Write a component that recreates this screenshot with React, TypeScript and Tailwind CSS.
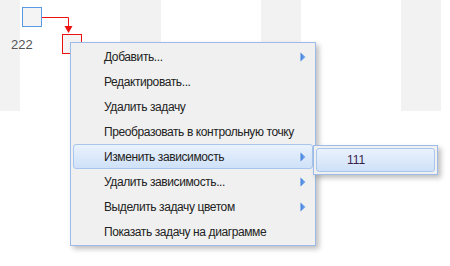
const items = [
  { label: "Добавить...", sub: true },
  { label: "Редактировать...", sub: false },
  { label: "Удалить задачу", sub: false },
  { label: "Преобразовать в контрольную точку", sub: false },
  { label: "Изменить зависимость", sub: true, active: true },
  { label: "Удалить зависимость...", sub: true },
  { label: "Выделить задачу цветом", sub: true },
  { label: "Показать задачу на диаграмме", sub: false },
];

function Arrow() {
  return (
    <svg width="6" height="10" viewBox="0 0 6 10" className="shrink-0">
      <defs>
        <linearGradient id="ag" x1="0" y1="0" x2="1" y2="0">
          <stop offset="0" stopColor="#3f7fdc" />
          <stop offset="1" stopColor="#7db0f0" />
        </linearGradient>
      </defs>
      <path d="M0.5 0.5 L5.5 5 L0.5 9.5 Z" fill="url(#ag)" />
    </svg>
  );
}

export default function App() {
  return (
    <div
      className="relative w-[450px] h-[266px] bg-white overflow-hidden text-[12px] text-[#222]"
      style={{ fontFamily: '"Liberation Sans", Arial, sans-serif' }}
    >
      {/* timeline stripes */}
      <div className="flex h-[111px]">
        <div className="w-[20px] bg-[#f2f2f2]" />
        <div className="w-[100px]" />
        <div className="w-[41px] bg-[#f2f2f2]" />
        <div className="w-[100px]" />
        <div className="w-[40px] bg-[#f2f2f2]" />
        <div className="w-[100px]" />
        <div className="w-[40px] bg-[#f2f2f2]" />
      </div>

      {/* tasks */}
      <div className="absolute left-[22px] top-[7px] w-[20px] h-[20px] border border-[#5b9be6] bg-[#f4f4f4]" />
      <div className="absolute left-[11px] top-[35px] text-[13px] text-[#555]">222</div>
      <svg className="absolute left-0 top-0" width="100" height="60">
        <path d="M42 17.5 H68.5 V27" stroke="#ee1111" strokeWidth="1" fill="none" />
        <path d="M64.5 26 H72.5 L68.5 33 Z" fill="#ee1111" />
      </svg>
      <div className="absolute left-[62px] top-[34px] w-[20px] h-[20px] border border-[#ee1111] bg-[#f4f4f4]" />

      {/* context menu */}
      <div className="absolute left-[70px] top-[42px] w-[246px] border border-[#9dbbe8] bg-[#f0f0f0] py-[1px] px-[2px] shadow-[3px_3px_5px_rgba(0,0,0,0.25)] tracking-[-0.4px]">
        {items.map((it) => (
          <div
            key={it.label}
            className={
              "flex items-center h-[25px] pl-[30px] pr-[6px] " +
              (it.active
                ? "rounded-[3px] border border-[#a9c6ee] bg-gradient-to-b from-[#eaf2fd] to-[#cfe1f8]"
                : "border border-transparent")
            }
          >
            <span className="flex-1 whitespace-nowrap">{it.label}</span>
            {it.sub && <Arrow />}
          </div>
        ))}
      </div>

      {/* submenu */}
      <div className="absolute left-[313px] top-[145px] w-[125px] h-[30px] border border-[#9dbbe8] bg-[#f0f0f0] p-[2px] shadow-[3px_3px_5px_rgba(0,0,0,0.25)]">
        <div className="flex items-center h-full rounded-[3px] border border-[#a9c6ee] bg-gradient-to-b from-[#eaf2fd] to-[#cfe1f8] pl-[30px] text-[#3a1f4a]">
          111
        </div>
      </div>
    </div>
  );
}
